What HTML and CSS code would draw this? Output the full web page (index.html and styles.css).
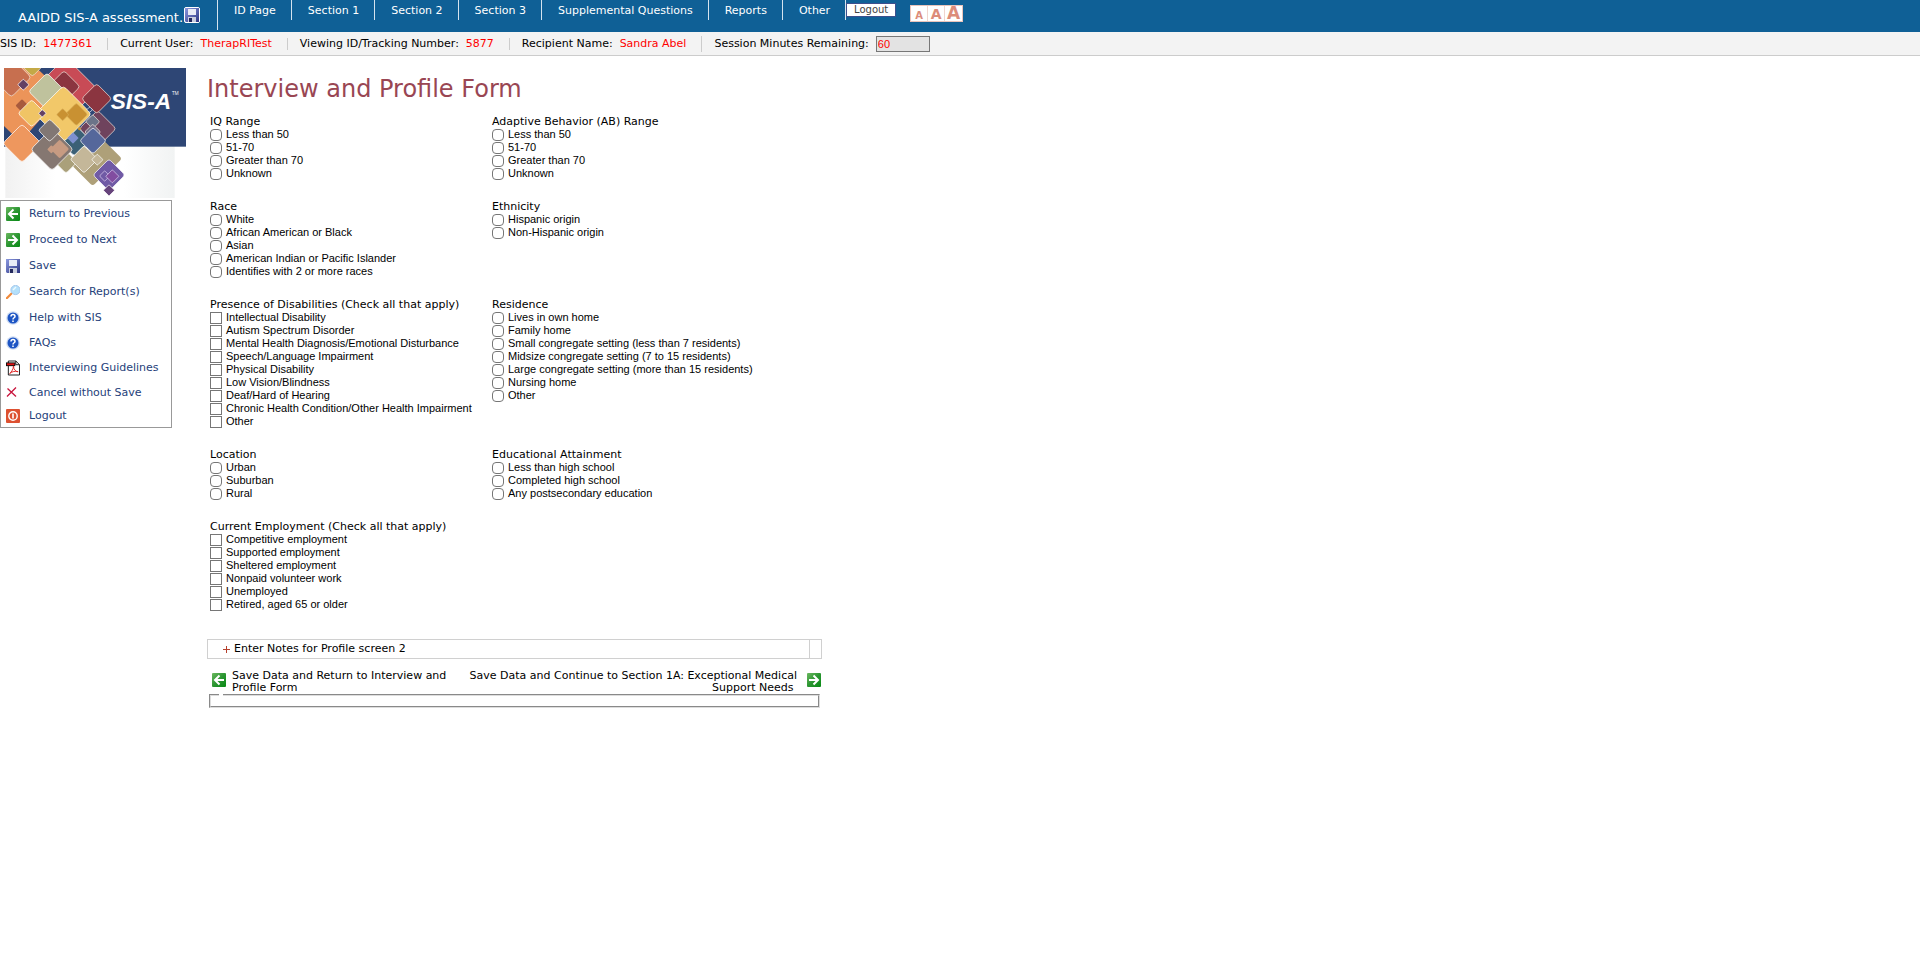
FILE: index.html
```
<!DOCTYPE html>
<html lang="en">
<head>
<meta charset="utf-8">
<title>Interview and Profile Form</title>
<link rel="stylesheet" href="styles.css">
</head>
<body>
<svg class="defs" aria-hidden="true">
  <defs>
    <linearGradient id="green" x1="0" y1="0" x2="1" y2="1"><stop offset="0" stop-color="#6cb860"/><stop offset=".5" stop-color="#2c9632"/><stop offset="1" stop-color="#078a14"/></linearGradient>
    <linearGradient id="disk" x1="0" y1="0" x2="1" y2="1"><stop offset="0" stop-color="#8c9ae0"/><stop offset="1" stop-color="#2c3583"/></linearGradient>
    <linearGradient id="fade" x1="0" x2="1"><stop offset="0" stop-color="#f1f1f1"/><stop offset=".3" stop-color="#ffffff"/><stop offset=".7" stop-color="#ffffff"/><stop offset="1" stop-color="#f1f3f3"/></linearGradient>
    <symbol id="left" viewBox="0 0 14 14"><rect width="14" height="14" rx="1" fill="url(#green)"/><path d="M12 7H3.500M7.500 2.500L3 7l4.500 4.500" fill="none" stroke="#fff" stroke-width="2"/></symbol>
    <symbol id="right" viewBox="0 0 14 14"><rect width="14" height="14" rx="1" fill="url(#green)"/><path d="M2 7h8.500M6.500 2.500L11 7l-4.500 4.500" fill="none" stroke="#fff" stroke-width="2"/></symbol>
    <symbol id="save" viewBox="0 0 14 14"><path d="M0 0h14v14H1l-1-1z" fill="url(#disk)"/><path d="M3 1h8v6H3z" fill="#e9ecf6"/><path d="M3 9h8v5H3z" fill="#c9cede"/><path d="M4 10h3v4H4z" fill="#22285c"/></symbol>
    <symbol id="help" viewBox="0 0 14 14"><circle cx="7" cy="7" r="6.800" fill="#cfdcf2"/><circle cx="7" cy="7" r="5.500" fill="#1d55c4"/><path d="M5 5.400c0-2.400 4-2.400 4 0C9 6.800 7 6.700 7 8.400M7 9.600v1.500" fill="none" stroke="#fff" stroke-width="1.500"/></symbol>
  </defs>
</svg>

<header class="topbar">
  <div class="brand"><span>AAIDD SIS-A assessment.</span>
    <button class="save-btn" aria-label="Save"><svg width="14" height="14"><use href="#save"/></svg></button></div>
  <nav class="nav">
    <a href="#">ID Page</a><a href="#">Section 1</a><a href="#">Section 2</a><a href="#">Section 3</a><a href="#">Supplemental Questions</a><a href="#">Reports</a><a href="#">Other</a>
    <button class="logout">Logout</button>
  </nav>
  <div class="sizes"><button class="small">A</button><button class="medium">A</button><button class="large">A</button></div>
</header>

<div class="status">
  <span>SIS ID: <b>1477361</b></span>
  <span>Current User: <b>TherapRITest</b></span>
  <span>Viewing ID/Tracking Number: <b>5877</b></span>
  <span>Recipient Name: <b>Sandra Abel</b></span>
  <span><label for="minutes">Session Minutes Remaining:</label> <input id="minutes" type="text" value="60" readonly></span>
</div>

<div class="page">
  <aside class="side">
    <svg class="logo" viewBox="12 24 546 390" width="182" height="130" role="img" aria-label="SIS-A">
      <rect x="16" y="258" width="508" height="156" fill="url(#fade)"/>
      <rect x="12" y="24" width="546" height="236" fill="#2e4675"/>
      <path d="M12 24H110L190 100 75 230H45L12 198z" fill="#ec9459"/>
      <g stroke="#f1e6dc" stroke-width="2">
        <rect x="-68" y="-68" width="136" height="136" rx="12" transform="translate(197 88) rotate(45)" fill="#c84b56"/>
        <rect x="-23" y="-23" width="46" height="46" rx="8" transform="translate(97 17) rotate(45)" fill="#c4a947"/>
        <rect x="-42" y="-42" width="84" height="84" rx="10" transform="translate(34 52) rotate(45)" fill="#c76f4f"/>
        <rect x="-34" y="-34" width="68" height="68" rx="9" transform="translate(192 80) rotate(45)" fill="#8b3540"/>
        <rect x="-39" y="-39" width="78" height="78" rx="9" transform="translate(293 206) rotate(45)" fill="#6f435d"/>
        <rect x="-32" y="-32" width="64" height="64" rx="9" transform="translate(290 116) rotate(45)" fill="#8b3540"/>
        <rect x="-15" y="-15" width="30" height="30" rx="5" transform="translate(278 185) rotate(45)" fill="#6c7489"/>
        <rect x="-17" y="-17" width="34" height="34" rx="5" transform="translate(278 216) rotate(45)" fill="#77718a"/>
      </g>
      <g stroke="#fff" stroke-width="2">
        <rect x="-41" y="-41" width="82" height="82" rx="9" transform="translate(308 296) rotate(45)" fill="#aea079" stroke="none"/>
        <rect x="-44" y="-44" width="88" height="88" rx="9" transform="translate(278 316) rotate(45)" fill="#aea079" stroke="none"/>
        <rect x="-24" y="-24" width="48" height="48" rx="7" transform="translate(198 306) rotate(45)" fill="#aaa07a"/>
        <rect x="-34" y="-34" width="68" height="68" rx="8" transform="translate(223 240) rotate(45)" fill="#3b6076"/>
        <rect x="-41" y="-41" width="82" height="82" rx="10" transform="translate(66 250) rotate(45)" fill="#ee975e"/>
        <rect x="-39" y="-39" width="78" height="78" rx="9" transform="translate(141 94) rotate(45)" fill="#bfc29d"/>
        <rect x="-60" y="-60" width="120" height="120" rx="12" transform="translate(190 162) rotate(45)" fill="#f2c869"/>
        <rect x="-14" y="-14" width="28" height="28" rx="4" transform="translate(66 137) rotate(45)" fill="#a85a3d" stroke="none"/>
        <rect x="-29" y="-29" width="58" height="58" rx="8" transform="translate(95 160) rotate(45)" fill="#f0c465"/>
        <rect x="-12" y="-12" width="24" height="24" rx="3" transform="translate(70 74) rotate(45)" fill="#634064"/>
        <rect x="-8" y="-8" width="16" height="16" rx="2" transform="translate(127 160) rotate(45)" fill="#634064"/>
        <rect x="-6" y="-6" width="12" height="12" rx="2" transform="translate(269 149) rotate(45)" fill="#2e4675"/>
        <rect x="-24" y="-24" width="48" height="48" rx="6" transform="translate(229 163) rotate(45)" fill="#c99132" stroke="#d8ad56"/>
        <rect x="-13" y="-13" width="26" height="26" rx="3" transform="translate(188 164) rotate(45)" fill="#c99132" stroke="#d8ad56"/>
        <rect x="-45" y="-45" width="90" height="90" rx="10" transform="translate(156 268) rotate(45)" fill="#857771"/>
        <rect x="-24" y="-24" width="48" height="48" rx="7" transform="translate(149 211) rotate(45)" fill="#817774"/>
        <rect x="-20" y="-20" width="40" height="40" rx="4" transform="translate(179 267) rotate(45)" fill="#c79b82" stroke="none"/>
        <rect x="-9" y="-9" width="18" height="18" rx="3" transform="translate(154 268) rotate(45)" fill="#c79b82" stroke="none"/>
        <rect x="-12" y="-12" width="24" height="24" rx="2" transform="translate(219 234) rotate(45)" fill="#7e90cf" stroke="none"/>
        <rect x="-4" y="-4" width="8" height="8" transform="translate(238 206) rotate(45)" fill="#c99132" stroke="none"/>
        <rect x="-28" y="-28" width="56" height="56" rx="7" transform="translate(279 242) rotate(45)" fill="#55679b"/>
        <rect x="-29" y="-29" width="58" height="58" rx="6" transform="translate(252 298) rotate(45)" fill="#c4b799"/>
        <rect x="-12" y="-12" width="24" height="24" rx="3" transform="translate(292 299) rotate(45)" fill="#c4b799"/>
        <rect x="-34" y="-34" width="68" height="68" rx="8" transform="translate(327 345) rotate(45)" fill="#705aa5"/>
        <rect x="-11" y="-11" width="22" height="22" rx="2" transform="translate(314 348) rotate(45)" fill="none" stroke="#ddcdf0"/>
        <rect x="-14" y="-14" width="28" height="28" rx="2" transform="translate(337 349) rotate(45)" fill="#824da0" stroke="#ddcdf0"/>
        <rect x="-12" y="-12" width="24" height="24" rx="2" transform="translate(327 391) rotate(45)" fill="#67447c"/>
      </g>
      <text x="332" y="148" class="logo-name">SIS-A</text>
      <text x="516" y="106" class="logo-tm">TM</text>
    </svg>
    <nav class="menu">
      <a class="tall" href="#"><svg viewBox="0 0 14 14"><use href="#left"/></svg>Return to Previous</a>
      <a class="tall" href="#"><svg viewBox="0 0 14 14"><use href="#right"/></svg>Proceed to Next</a>
      <a class="tall" href="#"><svg viewBox="0 0 14 14"><use href="#save"/></svg>Save</a>
      <a class="tall" href="#"><svg viewBox="0 0 14 14"><path d="M0 14l6-6" stroke="#f08a3c" stroke-width="2.200"/><circle cx="9.500" cy="5" r="4.600" fill="#b4e0fa" stroke="#a5c8ec"/><path d="M7 5l3-3" stroke="#eefaff" stroke-width="1.500"/></svg>Search for Report(s)</a>
      <a href="#"><svg viewBox="0 0 14 14"><use href="#help"/></svg>Help with SIS</a>
      <a href="#"><svg viewBox="0 0 14 14"><use href="#help"/></svg>FAQs</a>
      <a href="#"><svg class="pdf" viewBox="0 0 15 16"><path d="M2.500.500h8l4 4v11h-12z" fill="#fff" stroke="#111"/><path d="M10.500.500v4h4" fill="none" stroke="#111"/><rect y="2" width="10" height="4" fill="#111"/><path d="M1 3h8v2H1z" fill="#e01010"/><path d="M4 14c2-2 4-5 4-8 0 4 3 6 5 6-4-1-7 0-9 2z" fill="none" stroke="#e02020"/></svg>Interviewing Guidelines</a>
      <a href="#"><svg viewBox="0 0 14 14"><path d="M1.500 2.500l8.500 8M10 1.500l-9 9" stroke="#c8143c" stroke-width="1.300"/></svg>Cancel without Save</a>
      <a class="short" href="#"><svg viewBox="0 0 14 14"><rect width="14" height="14" rx="1" fill="#dd5131"/><circle cx="7" cy="7" r="4.200" fill="none" stroke="#fff" stroke-width="1.400"/><path d="M7 4.500v5" stroke="#fff" stroke-width="1.600"/></svg>Logout</a>
    </nav>
  </aside>

  <main class="main">
    <h1>Interview and Profile Form</h1>
    <form class="form">
      <div class="groups">
        <fieldset><legend>IQ Range</legend>
          <label><input type="radio" name="iq">Less than 50</label>
          <label><input type="radio" name="iq">51-70</label>
          <label><input type="radio" name="iq">Greater than 70</label>
          <label><input type="radio" name="iq">Unknown</label></fieldset>
        <fieldset><legend>Adaptive Behavior (AB) Range</legend>
          <label><input type="radio" name="ab">Less than 50</label>
          <label><input type="radio" name="ab">51-70</label>
          <label><input type="radio" name="ab">Greater than 70</label>
          <label><input type="radio" name="ab">Unknown</label></fieldset>
        <fieldset><legend>Race</legend>
          <label><input type="radio" name="race">White</label>
          <label><input type="radio" name="race">African American or Black</label>
          <label><input type="radio" name="race">Asian</label>
          <label><input type="radio" name="race">American Indian or Pacific Islander</label>
          <label><input type="radio" name="race">Identifies with 2 or more races</label></fieldset>
        <fieldset><legend>Ethnicity</legend>
          <label><input type="radio" name="eth">Hispanic origin</label>
          <label><input type="radio" name="eth">Non-Hispanic origin</label></fieldset>
        <fieldset><legend>Presence of Disabilities (Check all that apply)</legend>
          <label><input type="checkbox">Intellectual Disability</label>
          <label><input type="checkbox">Autism Spectrum Disorder</label>
          <label><input type="checkbox">Mental Health Diagnosis/Emotional Disturbance</label>
          <label><input type="checkbox">Speech/Language Impairment</label>
          <label><input type="checkbox">Physical Disability</label>
          <label><input type="checkbox">Low Vision/Blindness</label>
          <label><input type="checkbox">Deaf/Hard of Hearing</label>
          <label><input type="checkbox">Chronic Health Condition/Other Health Impairment</label>
          <label><input type="checkbox">Other</label></fieldset>
        <fieldset><legend>Residence</legend>
          <label><input type="radio" name="res">Lives in own home</label>
          <label><input type="radio" name="res">Family home</label>
          <label><input type="radio" name="res">Small congregate setting (less than 7 residents)</label>
          <label><input type="radio" name="res">Midsize congregate setting (7 to 15 residents)</label>
          <label><input type="radio" name="res">Large congregate setting (more than 15 residents)</label>
          <label><input type="radio" name="res">Nursing home</label>
          <label><input type="radio" name="res">Other</label></fieldset>
        <fieldset><legend>Location</legend>
          <label><input type="radio" name="loc">Urban</label>
          <label><input type="radio" name="loc">Suburban</label>
          <label><input type="radio" name="loc">Rural</label></fieldset>
        <fieldset><legend>Educational Attainment</legend>
          <label><input type="radio" name="edu">Less than high school</label>
          <label><input type="radio" name="edu">Completed high school</label>
          <label><input type="radio" name="edu">Any postsecondary education</label></fieldset>
        <fieldset><legend>Current Employment (Check all that apply)</legend>
          <label><input type="checkbox">Competitive employment</label>
          <label><input type="checkbox">Supported employment</label>
          <label><input type="checkbox">Sheltered employment</label>
          <label><input type="checkbox">Nonpaid volunteer work</label>
          <label><input type="checkbox">Unemployed</label>
          <label><input type="checkbox">Retired, aged 65 or older</label></fieldset>
      </div>
      <div class="notes"><a href="#"><svg width="7" height="7" viewBox="0 0 7 7"><path d="M3.500 0v7M0 3.500h7" stroke="#b5402c"/></svg>Enter Notes for Profile screen 2</a><span></span></div>
      <div class="actions">
        <a href="#"><svg width="14" height="14"><use href="#left"/></svg><span>Save Data and Return to Interview and<br>Profile Form</span></a>
        <a class="next" href="#"><span>Save Data and Continue to Section 1A: Exceptional Medical<br>Support Needs&nbsp;</span><svg width="14" height="14"><use href="#right"/></svg></a>
      </div>
      <fieldset class="messages"><legend></legend></fieldset>
    </form>
  </main>
</div>
</body>
</html>
```
FILE: styles.css
```
* { box-sizing: border-box; }
body { margin: 0; background: #fff; color: #000; font: 11px/12px Verdana, "DejaVu Sans", sans-serif; }
a { color: inherit; text-decoration: none; }
button { font: inherit; padding: 0; cursor: pointer; }
svg { display: block; flex: none; }
.defs { position: absolute; width: 0; height: 0; }

.topbar { display: flex; align-items: flex-start; height: 32px; background: #0f6096; color: #fff; }
.brand { display: flex; align-items: center; gap: 1px; width: 218px; height: 30px; padding-left: 18px; border-right: 1px solid #d5e3ee; font-size: 13px; white-space: nowrap; }
.brand span { padding-top: 5px; }
.save-btn { display: block; background: #fff; border: 1px solid #fff; border-radius: 2px; }
.nav { display: flex; align-items: flex-start; }
.nav a { height: 20px; padding: 5px 15px 0 16px; border-right: 1px solid #d5e3ee; white-space: nowrap; }
.logout { width: 50px; height: 14px; margin-top: 3px; background: #fff; border: 1px solid #3c4f8c; color: #444; font: 10px/10px "DejaVu Sans", sans-serif; }
.sizes { display: flex; margin: 5px 0 0 14px; background: #fff; border: 1px solid #eac4bb; }
.sizes button { display: flex; align-items: flex-end; justify-content: center; width: 17px; height: 15px; background: #fff; border: 0; border-right: 1px solid #f0d5ce; color: #dc8c7a; font-weight: bold; }
.sizes button:last-child { border-right: 0; }
.sizes .small { font-size: 10px; line-height: 10px; }
.sizes .medium { font-size: 14px; line-height: 13px; }
.sizes .large { font-size: 17px; line-height: 15px; }

.status { display: flex; align-items: center; height: 24px; background: #f3f3f3; border-bottom: 1px solid #ccc; white-space: nowrap; }
.status > span { display: flex; align-items: center; gap: 7px; padding-right: 15px; }
.status > span + span { padding-left: 12px; border-left: 1px solid #ccc; }
.status b { font-weight: normal; color: #f00; }
.status input { width: 54px; height: 16px; padding: 0 1px; border: 1px solid #777; background: #e3e3e3; color: #f00; font: 11px/12px "Liberation Sans", Arial, sans-serif; }

.page { display: flex; padding-top: 12px; }
.side { width: 207px; flex: none; }
.logo { margin-left: 4px; }
.logo-name { font: italic bold 68px "Liberation Sans", Arial, sans-serif; fill: #fff; }
.logo-tm { font: 14px "Open Sans", sans-serif; fill: #fff; }
.menu { width: 172px; margin-top: 2px; padding: 0 0 0 5px; border: 1px solid #999; color: #25417a; }
.menu a { display: flex; align-items: center; gap: 9px; height: 25px; }
.menu .tall { height: 26px; }
.menu .short { height: 22px; }
.menu svg { width: 14px; height: 14px; }
.menu .pdf { height: 16px; }

.main { flex: 1; }
h1 { margin: 6px 0 10px; font-size: 24px; line-height: 31px; font-weight: normal; color: #994653; }
.form { width: 615px; }
.groups { display: grid; grid-template-columns: 282px 1fr; row-gap: 20px; padding-left: 3px; }
.groups fieldset { min-width: 0; margin: 0; padding: 0; border: 0; }
.groups legend { padding: 0; line-height: 13px; white-space: nowrap; }
.groups label { display: flex; align-items: center; gap: 4px; height: 13px; font: 11px/13px "Liberation Sans", Arial, sans-serif; white-space: nowrap; }
.groups input { appearance: none; width: 12px; height: 12px; margin: 0; border: 1px solid #767676; background: #fff; }
.groups input[type=radio] { border-radius: 4px; }
.notes { display: flex; height: 20px; margin-top: 28px; border: 1px solid #d0d0d0; }
.notes a { display: flex; flex: 1; align-items: center; gap: 4px; padding-left: 15px; }
.notes span { width: 12px; border-left: 1px solid #d0d0d0; }
.actions { display: flex; justify-content: space-between; margin-top: 11px; padding: 0 1px 0 5px; white-space: nowrap; }
.actions a { display: flex; align-items: flex-start; gap: 6px; }
.actions svg { margin-top: 3px; }
.actions .next { gap: 10px; text-align: right; }
.messages { height: 14px; margin: 0 2px; padding: 0; border: 2px groove #ddd; }
.messages legend { width: 4px; height: 2px; margin-left: 8px; padding: 0; }
```
